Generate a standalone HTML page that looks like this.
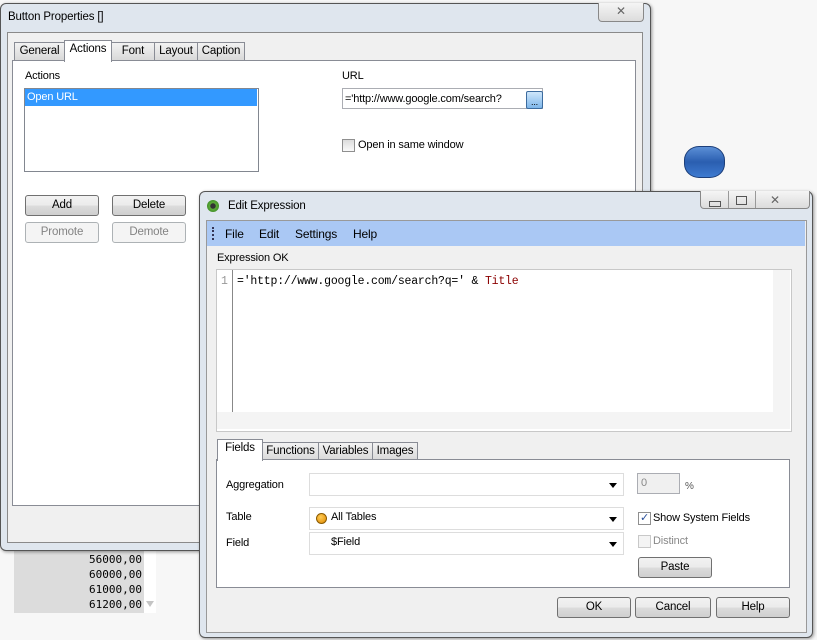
<html><head><style>
body{margin:0;width:817px;height:640px;background:#f7f7f7;position:relative;overflow:hidden;font-family:"Liberation Sans",sans-serif;font-size:11px;letter-spacing:-0.15px;color:#000}
.a{position:absolute}
.win{background:#dfe6ee;border:1px solid #555;border-radius:6px;box-shadow:1px 1px 3px rgba(0,0,0,.4)}
.client{background:#f0f0f0;border:1px solid #8a8a8a}
.btn{position:absolute;border:1px solid #707070;border-radius:3px;background:linear-gradient(#f2f2f2,#ebebeb 50%,#dcdcdc 51%,#cfcfcf);text-align:center;line-height:19px;font-size:11.5px}
.dis{border-color:#adb2b5;background:#f4f4f4;color:#838383}
.tab{position:absolute;border:1px solid #898c95;border-bottom:none;background:linear-gradient(#f2f2f2,#d9d9d9);text-align:center;line-height:17px;font-size:11.5px}
.field{position:absolute;background:#fff;border:1px solid #abadb3}
.dd:after{content:"";position:absolute;right:6px;top:50%;margin-top:-2px;border:4px solid transparent;border-top:5px solid #000;border-bottom:0}
.cb{position:absolute;width:11px;height:11px;border:1px solid #8f8f8f;background:linear-gradient(#dcdcdc,#fafafa)}
</style></head><body>
<div class="a" style="left:14px;top:545px;width:130px;height:68px;background:#dcdcdc"></div>
<div class="a" style="left:144px;top:545px;width:12px;height:68px;background:#fff"></div>
<div class="a" style="left:146px;top:601px;border:4px solid transparent;border-top:6px solid #c4c4c4"></div>
<div class="a" style="left:60px;top:552px;width:82px;text-align:right;font-family:'DejaVu Sans Mono',monospace;font-size:11px;letter-spacing:0;line-height:15px">56000,00<br>60000,00<br>61000,00<br>61200,00</div>
<div class="a" style="left:684px;top:146px;width:39px;height:30px;border-radius:15px/14px;background:linear-gradient(#5b8fd6,#2a5eb0 50%,#3e7bd0);border:1px solid #1d3f7a"></div>

<div class="a win" style="left:0;top:3px;width:649px;height:546px"></div>
<div class="a" style="left:8px;top:11px;font-size:11.5px">Button Properties []</div>
<div class="a" style="left:598px;top:3px;width:44px;height:18px;border:1px solid #888;border-top:none;border-radius:0 0 4px 4px;background:linear-gradient(#f5f5f5,#dcdcdc);text-align:center;color:#666;font-size:12px;line-height:16px">✕</div>
<div class="a client" style="left:7px;top:32px;width:634px;height:509px"></div>
<div class="tab" style="left:14px;top:42px;width:49px">General</div>
<div class="tab" style="left:64px;top:40px;width:46px;background:#fff;height:21px;z-index:2">Actions</div>
<div class="tab" style="left:111px;top:42px;width:42px">Font</div>
<div class="tab" style="left:154px;top:42px;width:42px">Layout</div>
<div class="tab" style="left:197px;top:42px;width:46px">Caption</div>
<div class="a" style="left:12px;top:60px;width:622px;height:444px;background:#fff;border:1px solid #898c95"></div>
<div class="a" style="left:25px;top:70px">Actions</div>
<div class="a" style="left:24px;top:88px;width:233px;height:82px;background:#fff;border:1px solid #828790"></div>
<div class="a" style="left:25px;top:89px;width:232px;height:17px;background:#3399ff;color:#fff;line-height:17px;padding-left:2px;box-sizing:border-box">Open URL</div>
<div class="a" style="left:342px;top:70px">URL</div>
<div class="field" style="left:342px;top:88px;width:201px;height:21px;line-height:21px;padding-left:2px;box-sizing:border-box">='http://www.google.com/search?</div>
<div class="a" style="left:526px;top:91px;width:15px;height:16px;border:1px solid #3c6b9e;border-radius:2px;background:linear-gradient(#cfe6fb,#7fb6ea);font-size:9px;line-height:20px;text-align:center">...</div>
<div class="cb" style="left:342px;top:139px"></div>
<div class="a" style="left:358px;top:139px">Open in same window</div>
<div class="btn" style="left:25px;top:195px;width:72px">Add</div>
<div class="btn" style="left:112px;top:195px;width:72px">Delete</div>
<div class="btn dis" style="left:25px;top:222px;width:72px">Promote</div>
<div class="btn dis" style="left:112px;top:222px;width:72px">Demote</div>

<div class="a win" style="left:199px;top:191px;width:612px;height:445px"></div>
<div class="a" style="left:207px;top:200px;width:12px;height:12px;border-radius:50%;background:radial-gradient(#333 30%,#5fae3a 35%,#2f7a1e)"></div>
<div class="a" style="left:228px;top:200px;font-size:11.5px">Edit Expression</div>
<div class="a" style="left:700px;top:191px;width:108px;height:17px;border:1px solid #888;border-top:none;border-radius:0 0 4px 4px;background:linear-gradient(#f5f5f5,#dcdcdc)"></div>
<div class="a" style="left:728px;top:191px;width:1px;height:17px;background:#999"></div>
<div class="a" style="left:755px;top:191px;width:1px;height:17px;background:#999"></div>
<div class="a" style="left:709px;top:201px;width:10px;height:4px;border:1px solid #555"></div>
<div class="a" style="left:736px;top:196px;width:9px;height:7px;border:1px solid #555"></div>
<div class="a" style="left:770px;top:193px;color:#666;font-size:12px">✕</div>
<div class="a client" style="left:206px;top:220px;width:599px;height:411px;border-color:#999"></div>
<div class="a" style="left:207px;top:221px;width:598px;height:25px;background:#aac8f4"></div>
<div class="a" style="left:212px;top:227px;width:2px;height:13px;border-left:2px dotted #335"></div>
<div class="a" style="left:225px;top:227px;font-size:12px">File</div>
<div class="a" style="left:259px;top:227px;font-size:12px">Edit</div>
<div class="a" style="left:295px;top:227px;font-size:12px">Settings</div>
<div class="a" style="left:353px;top:227px;font-size:12px">Help</div>
<div class="a" style="left:217px;top:252px">Expression OK</div>
<div class="a" style="left:216px;top:269px;width:574px;height:161px;background:#fff;border:1px solid #c8c8c8"></div>
<div class="a" style="left:232px;top:270px;width:1px;height:142px;background:#888"></div>
<div class="a" style="left:773px;top:270px;width:17px;height:142px;background:#f4f4f4"></div>
<div class="a" style="left:217px;top:412px;width:573px;height:17px;background:#f4f4f4"></div>
<div class="a" style="left:221px;top:275px;color:#999;font-family:'Liberation Mono',monospace;font-size:11.5px;letter-spacing:0">1</div>
<div class="a" style="left:237px;top:275px;font-family:'Liberation Mono',monospace;font-size:11.5px;letter-spacing:-0.2px">='http://www.google.com/search?q=' &amp; <span style="color:#8b0000">Title</span></div>
<div class="tab" style="left:217px;top:439px;width:44px;background:#fff;height:21px;z-index:2">Fields</div>
<div class="tab" style="left:262px;top:442px;width:55px">Functions</div>
<div class="tab" style="left:318px;top:442px;width:53px">Variables</div>
<div class="tab" style="left:372px;top:442px;width:44px">Images</div>
<div class="a" style="left:216px;top:459px;width:572px;height:127px;background:#fff;border:1px solid #898c95"></div>
<div class="a" style="left:226px;top:479px">Aggregation</div>
<div class="field dd" style="left:309px;top:473px;width:313px;height:21px;border-color:#ddd"></div>
<div class="field" style="left:637px;top:473px;width:43px;height:21px;background:#f0f0f0;color:#888;padding-left:3px;box-sizing:border-box;line-height:18px">0</div>
<div class="a" style="left:685px;top:481px;font-size:10px;color:#555">%</div>
<div class="a" style="left:226px;top:511px">Table</div>
<div class="field dd" style="left:309px;top:507px;width:313px;height:21px;border-color:#ddd"></div>
<div class="a" style="left:316px;top:513px;width:9px;height:9px;border-radius:50%;background:radial-gradient(circle at 40% 35%,#ffcc55,#e08800);border:1px solid #8a5a00"></div>
<div class="a" style="left:331px;top:511px">All Tables</div>
<div class="a" style="left:226px;top:537px">Field</div>
<div class="field dd" style="left:309px;top:532px;width:313px;height:21px;border-color:#ddd"></div>
<div class="a" style="left:331px;top:536px">$Field</div>
<div class="cb" style="left:638px;top:512px;background:#fff;color:#2a4f9a;font-size:11px;line-height:11px;text-align:center">✓</div>
<div class="a" style="left:653px;top:512px">Show System Fields</div>
<div class="cb" style="left:638px;top:535px;border-color:#c8c8c8;background:#f4f4f4"></div>
<div class="a" style="left:653px;top:535px;color:#888">Distinct</div>
<div class="btn" style="left:638px;top:557px;width:72px">Paste</div>
<div class="btn" style="left:557px;top:597px;width:72px">OK</div>
<div class="btn" style="left:635px;top:597px;width:74px">Cancel</div>
<div class="btn" style="left:716px;top:597px;width:72px">Help</div>
</body></html>
